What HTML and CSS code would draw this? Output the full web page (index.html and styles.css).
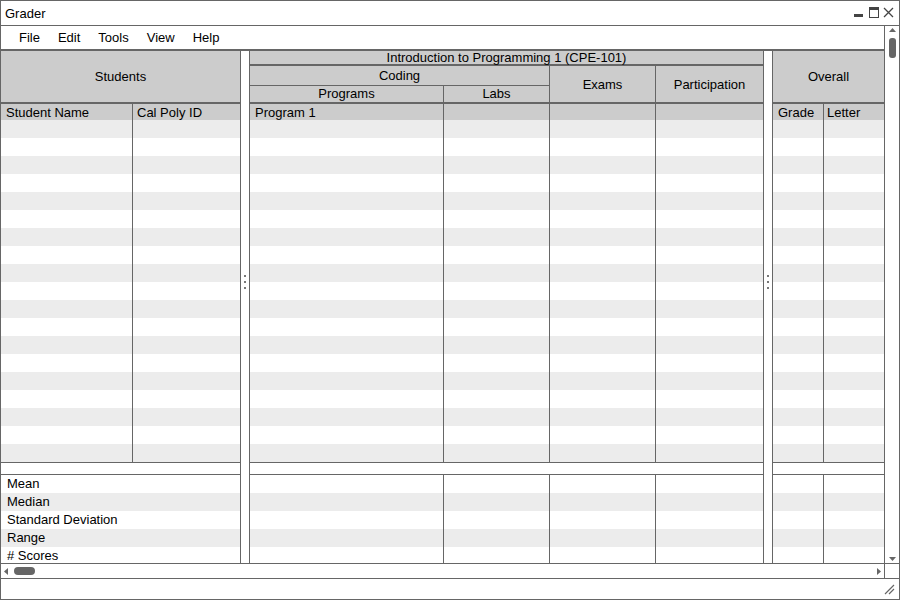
FILE: index.html
```html
<!DOCTYPE html>
<html lang="en">
<head>
    <meta charset="UTF-8">
    <title>Grader</title>
    <link rel="stylesheet" href="styles.css">
</head>
<body>
<div class="window">
    <div class="titlebar">
        <span class="title">Grader</span>
        <svg class="winbtns" width="44" height="12" viewBox="0 0 44 12">
            <rect x="3" y="7" width="9" height="3" fill="#444"/>
            <rect x="18.5" y="0.5" width="9" height="10" fill="none" stroke="#444"/>
            <rect x="18" y="0" width="10" height="3" fill="#444"/>
            <path d="M33 1 L42 10 M42 1 L33 10" stroke="#444" stroke-width="1.3"/>
        </svg>
    </div>

    <div class="middle">
        <div class="main">
            <div class="menubar">
                <span>File</span>
                <span>Edit</span>
                <span>Tools</span>
                <span>View</span>
                <span>Help</span>
            </div>

            <div class="panels">
                <!-- students -->
                <div class="panel p-left">
                    <div class="head">Students</div>
                    <div class="colhead">
                        <div class="cell w-name">Student Name</div>
                        <div class="cell last">Cal Poly ID</div>
                    </div>
                    <div class="body">
                        <div class="col w-name"></div>
                        <div class="col last"></div>
                    </div>
                    <div class="sep"></div>
                    <div class="stats labels">
                        <div class="stat">Mean</div>
                        <div class="stat">Median</div>
                        <div class="stat">Standard Deviation</div>
                        <div class="stat">Range</div>
                        <div class="stat"># Scores</div>
                    </div>
                </div>

                <div class="splitter"><i></i><i></i><i></i></div>

                <!-- course -->
                <div class="panel p-mid">
                    <div class="head head-course">
                        <div class="intro">Introduction to Programming 1 (CPE-101)</div>
                        <div class="lower">
                            <div class="coding-group">
                                <div class="coding">Coding</div>
                                <div class="sub">
                                    <div class="w-prog">Programs</div>
                                    <div class="labs">Labs</div>
                                </div>
                            </div>
                            <div class="w-exam">Exams</div>
                            <div class="part">Participation</div>
                        </div>
                    </div>
                    <div class="colhead">
                        <div class="cell w-prog">Program 1</div>
                        <div class="cell w-lab"></div>
                        <div class="cell w-exam"></div>
                        <div class="cell last"></div>
                    </div>
                    <div class="body">
                        <div class="col w-prog"></div>
                        <div class="col w-lab"></div>
                        <div class="col w-exam"></div>
                        <div class="col last"></div>
                    </div>
                    <div class="sep"></div>
                    <div class="stats">
                        <div class="col w-prog"></div>
                        <div class="col w-lab"></div>
                        <div class="col w-exam"></div>
                        <div class="col last"></div>
                    </div>
                </div>

                <div class="splitter"><i></i><i></i><i></i></div>

                <!-- overall -->
                <div class="panel p-right">
                    <div class="head">Overall</div>
                    <div class="colhead">
                        <div class="cell w-grade">Grade</div>
                        <div class="cell last letter">Letter</div>
                    </div>
                    <div class="body">
                        <div class="col w-grade"></div>
                        <div class="col last"></div>
                    </div>
                    <div class="sep"></div>
                    <div class="stats">
                        <div class="col w-grade"></div>
                        <div class="col last"></div>
                    </div>
                </div>
            </div>
        </div>

        <div class="vscroll">
            <svg class="arrow-up" width="7" height="4" viewBox="0 0 7 4"><path d="M0 4 L3.5 0 L7 4 Z" fill="#666"/></svg>
            <div class="vthumb"></div>
            <svg class="arrow-down" width="7" height="4" viewBox="0 0 7 4"><path d="M0 0 L7 0 L3.5 4 Z" fill="#666"/></svg>
        </div>
    </div>

    <div class="hscroll">
        <svg class="arrow-left" width="4" height="7" viewBox="0 0 4 7"><path d="M4 0 L0 3.5 L4 7 Z" fill="#666"/></svg>
        <div class="hthumb"></div>
        <div class="spacer"></div>
        <svg class="arrow-right" width="4" height="7" viewBox="0 0 4 7"><path d="M0 0 L4 3.5 L0 7 Z" fill="#666"/></svg>
        <div class="corner"></div>
    </div>

    <div class="statusbar">
        <svg class="grip" width="12" height="12" viewBox="0 0 12 12">
            <path d="M1 10 L10 1 M5 10 L10 5" stroke="#666" stroke-width="1.2"/>
        </svg>
    </div>
</div>
</body>
</html>
```

FILE: styles.css
```css
* {
    box-sizing: border-box;
}
body {
    margin: 0;
    font-family: "Liberation Sans", Arial, sans-serif;
    font-size: 13px;
    color: #000;
    background-color: #fff;
}
.window {
    width: 900px;
    height: 600px;
    border: 1px solid #666;
    display: flex;
    flex-direction: column;
    overflow: hidden;
}

/* title + menu */
.titlebar {
    height: 25px;
    flex-shrink: 0;
    border-bottom: 1px solid #666;
    display: flex;
    align-items: center;
    padding-left: 4px;
}
.titlebar .title {
    flex: 1;
}
.winbtns {
    margin-right: 4px;
}
.middle {
    display: flex;
    height: 537px;
    flex-shrink: 0;
}
.main {
    width: 883px;
    display: flex;
    flex-direction: column;
}
.menubar {
    height: 25px;
    flex-shrink: 0;
    border-bottom: 2px solid #666;
    display: flex;
    align-items: center;
    gap: 18px;
    padding-left: 18px;
}

/* panels */
.panels {
    display: flex;
    height: 512px;
    overflow: hidden;
}
.panel {
    display: flex;
    flex-direction: column;
    height: 512px;
}
.p-left {
    width: 240px;
    border-right: 1px solid #666;
}
.p-mid {
    width: 515px;
    border-left: 1px solid #666;
    border-right: 1px solid #666;
}
.p-right {
    width: 112px;
    border-left: 1px solid #666;
}
.splitter {
    width: 8px;
    display: flex;
    flex-direction: column;
    align-items: center;
    gap: 4px;
    padding-top: 224px;
}
.splitter i {
    width: 2px;
    height: 2px;
    background-color: #777;
}

.head {
    height: 53px;
    flex-shrink: 0;
    background-color: #ccc;
    border-bottom: 2px solid #666;
    display: flex;
    align-items: center;
    justify-content: center;
}
.head-course {
    flex-direction: column;
    align-items: stretch;
    justify-content: flex-start;
}
.intro {
    height: 15px;
    line-height: 13px;
    border-bottom: 2px solid #666;
    text-align: center;
}
.lower {
    display: flex;
    height: 36px;
}
.coding-group {
    width: 300px;
    border-right: 1px solid #666;
    display: flex;
    flex-direction: column;
}
.coding {
    height: 20px;
    line-height: 19px;
    border-bottom: 1px solid #666;
    text-align: center;
}
.sub {
    display: flex;
    height: 16px;
    line-height: 16px;
}
.sub .w-prog {
    text-align: center;
}
.sub .labs {
    flex: 1;
    text-align: center;
}
.lower .w-exam, .lower .part {
    display: flex;
    align-items: center;
    justify-content: center;
}
.lower .part {
    flex: 1;
}

/* column widths */
.w-name { width: 132px; }
.w-prog { width: 194px; border-right: 1px solid #666; }
.w-lab { width: 106px; }
.w-exam { width: 106px; border-right: 1px solid #666; }
.w-grade { width: 51px; }
.last { flex: 1; }

.colhead {
    height: 16px;
    flex-shrink: 0;
    display: flex;
    background-color: #ccc;
    line-height: 17px;
}
.cell {
    padding-left: 5px;
    white-space: nowrap;
    border-right: 1px solid #666;
}
.cell.last {
    border-right: none;
    padding-left: 4px;
}
.cell.letter {
    padding-left: 3px;
}

.body {
    height: 342px;
    flex-shrink: 0;
    display: flex;
    background: repeating-linear-gradient(#ececec 0 18px, #fff 18px 36px);
}
.col {
    border-right: 1px solid #666;
}
.col.last {
    border-right: none;
}
.sep {
    height: 13px;
    flex-shrink: 0;
    border-top: 1px solid #666;
    border-bottom: 1px solid #666;
}
.stats {
    flex: 1;
    display: flex;
    background: repeating-linear-gradient(#fff 0 18px, #ececec 18px 36px);
}
.stats.labels {
    flex-direction: column;
}
.stat {
    height: 18px;
    line-height: 18px;
    padding-left: 6px;
    flex-shrink: 0;
}

/* scrollbars */
.vscroll {
    width: 15px;
    border-left: 1px solid #666;
    display: flex;
    flex-direction: column;
    align-items: center;
}
.arrow-up {
    margin-top: 2px;
}
.vthumb {
    width: 7px;
    height: 20px;
    margin-top: 6px;
    border-radius: 3px;
    background-color: #666;
}
.arrow-down {
    margin-top: auto;
    margin-bottom: 2px;
}
.hscroll {
    height: 15px;
    flex-shrink: 0;
    border-top: 1px solid #666;
    display: flex;
    align-items: center;
}
.arrow-left {
    margin-left: 3px;
}
.hthumb {
    width: 21px;
    height: 8px;
    margin-left: 6px;
    border-radius: 4px;
    background-color: #666;
}
.spacer {
    flex: 1;
}
.arrow-right {
    margin-right: 3px;
}
.corner {
    width: 15px;
    height: 14px;
    border-left: 1px solid #666;
}
.statusbar {
    flex: 1;
    border-top: 1px solid #666;
    display: flex;
    justify-content: flex-end;
    align-items: flex-end;
}
.grip {
    margin-right: 3px;
    margin-bottom: 3px;
}
```
